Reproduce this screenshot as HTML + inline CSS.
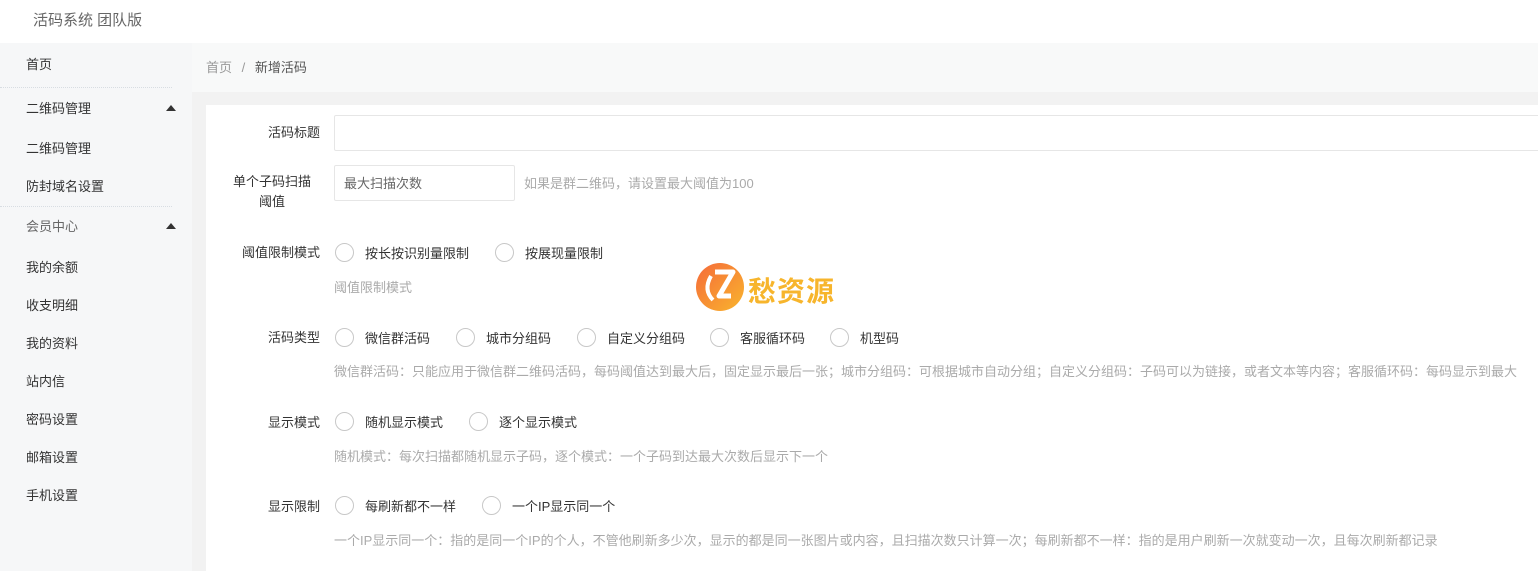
<!DOCTYPE html>
<html><head><meta charset="utf-8"><style>
*{margin:0;padding:0;box-sizing:border-box}
body{width:1538px;height:571px;overflow:hidden;background:#fff;font-family:"Liberation Sans","Noto Sans CJK SC",sans-serif;font-size:13px;color:#333;position:relative}
.a{position:absolute;white-space:nowrap}
.hdr{left:33px;top:9px;font-size:15px;color:#666}
.side{left:0;top:43px;width:192px;height:528px;background:#f6f7f8}
.si{left:26px;font-size:13px;color:#333}
.sep{left:0;width:172px;height:1px;border-top:1px dotted #d8dde2}
.tri{left:166px;width:0;height:0;border-left:5px solid transparent;border-right:5px solid transparent;border-bottom:6px solid #333}
.bc{left:192px;top:43px;width:1346px;height:49px;background:#f8f9f9}
.main{left:192px;top:92px;width:1346px;height:479px;background:#f2f2f2}
.card{left:206px;top:105px;width:1332px;height:466px;background:#fff}
.lb{width:120px;text-align:right;left:200px;color:#333}
.inp{border:1px solid #e6e6e6;background:#fff;border-radius:2px}
.r{width:19px;height:19px;border:1px solid #c8c8c8;border-radius:50%}
.tip{color:#aaa;font-size:13px}
</style></head><body>
<div class="a hdr">活码系统 团队版</div>
<div class="a side"></div>
<div class="a si" style="top:54px">首页</div>
<div class="a sep" style="top:87px"></div>
<div class="a si" style="top:98px">二维码管理</div><div class="a tri" style="top:105px"></div>
<div class="a si" style="top:138px">二维码管理</div>
<div class="a si" style="top:176px">防封域名设置</div>
<div class="a sep" style="top:206px"></div>
<div class="a si" style="top:216px;color:#666">会员中心</div><div class="a tri" style="top:223px"></div>
<div class="a si" style="top:257px">我的余额</div>
<div class="a si" style="top:295px">收支明细</div>
<div class="a si" style="top:333px">我的资料</div>
<div class="a si" style="top:371px">站内信</div>
<div class="a si" style="top:409px">密码设置</div>
<div class="a si" style="top:447px">邮箱设置</div>
<div class="a si" style="top:485px">手机设置</div>
<div class="a bc"></div>
<div class="a" style="left:206px;top:57px;color:#999">首页 <span style="margin:0 6px">/</span> <span style="color:#555">新增活码</span></div>
<div class="a main"></div>
<div class="a card"></div>
<div class="a lb" style="top:122px">活码标题</div>
<div class="a inp" style="left:334px;top:115px;width:1210px;height:36px"></div>
<div class="a lb" style="top:172px;line-height:20px;white-space:normal;width:100px;left:222px;text-align:center;">单个子码扫描<br>阈值</div>
<div class="a inp" style="left:334px;top:165px;width:181px;height:36px"></div>
<div class="a" style="left:344px;top:173px;color:#666">最大扫描次数</div>
<div class="a tip" style="left:524px;top:173px">如果是群二维码，请设置最大阈值为100</div>

<div class="a lb" style="top:242px">阈值限制模式</div>
<div class="a r" style="left:335px;top:243px"></div><div class="a" style="left:365px;top:243px">按长按识别量限制</div>
<div class="a r" style="left:495px;top:243px"></div><div class="a" style="left:525px;top:243px">按展现量限制</div>
<div class="a tip" style="left:334px;top:277px">阈值限制模式</div>

<div class="a lb" style="top:327px">活码类型</div>
<div class="a r" style="left:335px;top:328px"></div><div class="a" style="left:365px;top:328px">微信群活码</div>
<div class="a r" style="left:456px;top:328px"></div><div class="a" style="left:486px;top:328px">城市分组码</div>
<div class="a r" style="left:577px;top:328px"></div><div class="a" style="left:607px;top:328px">自定义分组码</div>
<div class="a r" style="left:710px;top:328px"></div><div class="a" style="left:740px;top:328px">客服循环码</div>
<div class="a r" style="left:830px;top:328px"></div><div class="a" style="left:860px;top:328px">机型码</div>
<div class="a tip" style="left:334px;top:361px">微信群活码：只能应用于微信群二维码活码，每码阈值达到最大后，固定显示最后一张；城市分组码：可根据城市自动分组；自定义分组码：子码可以为链接，或者文本等内容；客服循环码：每码显示到最大</div>

<div class="a lb" style="top:412px">显示模式</div>
<div class="a r" style="left:335px;top:412px"></div><div class="a" style="left:365px;top:412px">随机显示模式</div>
<div class="a r" style="left:469px;top:412px"></div><div class="a" style="left:499px;top:412px">逐个显示模式</div>
<div class="a tip" style="left:334px;top:446px">随机模式：每次扫描都随机显示子码，逐个模式：一个子码到达最大次数后显示下一个</div>

<div class="a lb" style="top:496px">显示限制</div>
<div class="a r" style="left:335px;top:496px"></div><div class="a" style="left:365px;top:496px">每刷新都不一样</div>
<div class="a r" style="left:482px;top:496px"></div><div class="a" style="left:512px;top:496px">一个IP显示同一个</div>
<div class="a tip" style="left:334px;top:530px">一个IP显示同一个：指的是同一个IP的个人，不管他刷新多少次，显示的都是同一张图片或内容，且扫描次数只计算一次；每刷新都不一样：指的是用户刷新一次就变动一次，且每次刷新都记录</div>

<svg class="a" style="left:695px;top:262px" width="50" height="50" viewBox="0 0 50 50">
<defs><linearGradient id="g" x1="0" y1="0" x2="1" y2="1"><stop offset="0" stop-color="#f56a3a"/><stop offset="1" stop-color="#f9b52d"/></linearGradient></defs>
<circle cx="25" cy="25" r="24" fill="url(#g)"/>
<path d="M20 10 H38 L24 34 H36" stroke="#fff" stroke-width="5" fill="none" stroke-linejoin="round"/>
<path d="M16 14 Q8 28 18 38" stroke="#fff" stroke-width="4" fill="none"/>
</svg>
<div class="a" style="left:748px;top:270px;font-size:28px;font-weight:bold;color:#f7b52c;letter-spacing:1px">愁资源</div>
</body></html>
